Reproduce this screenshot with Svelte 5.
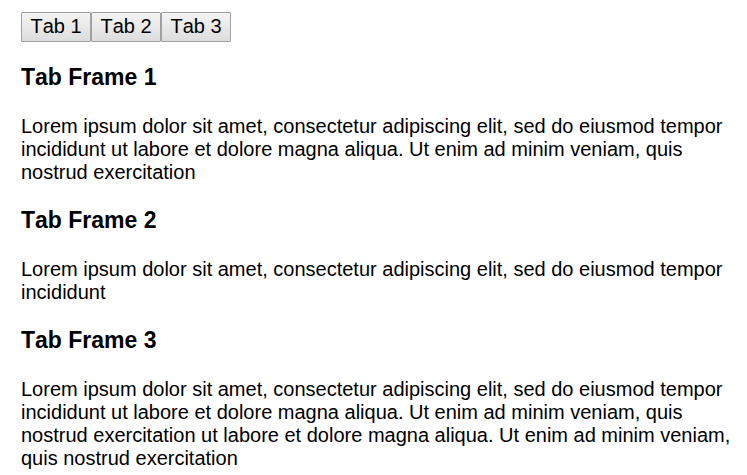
<script>
  const tabs = ['Tab 1', 'Tab 2', 'Tab 3'];
  const frames = [
    {
      title: 'Tab Frame 1',
      text: 'Lorem ipsum dolor sit amet, consectetur adipiscing elit, sed do eiusmod tempor incididunt ut labore et dolore magna aliqua. Ut enim ad minim veniam, quis nostrud exercitation'
    },
    {
      title: 'Tab Frame 2',
      text: 'Lorem ipsum dolor sit amet, consectetur adipiscing elit, sed do eiusmod tempor incididunt'
    },
    {
      title: 'Tab Frame 3',
      text: 'Lorem ipsum dolor sit amet, consectetur adipiscing elit, sed do eiusmod tempor incididunt ut labore et dolore magna aliqua. Ut enim ad minim veniam, quis nostrud exercitation ut labore et dolore magna aliqua. Ut enim ad minim veniam, quis nostrud exercitation'
    }
  ];
</script>

<main>
  <div class="tabs">
    {#each tabs as tab}
      <button type="button">{tab}</button>
    {/each}
  </div>
  <div class="frames">
    {#each frames as frame}
      <section>
        <h2>{frame.title}</h2>
        <p>{frame.text}</p>
      </section>
    {/each}
  </div>
</main>

<style>
  :global(body) {
    background: #fff;
  }

  main {
    padding: 12px 12px 0 21px;
    font: 20px/23px "Liberation Sans", Arial, sans-serif;
    font-kerning: none;
    color: #000;
  }

  .tabs {
    display: flex;
    margin-bottom: 24px;
  }

  button {
    box-sizing: border-box;
    min-width: 70px;
    margin: 0;
    padding: 2px 8px 3px;
    border: 1px solid #a0a0a0;
    border-radius: 1px;
    background: linear-gradient(#f4f4f4, #dddddd);
    font: inherit;
    font-kerning: none;
    color: #000;
  }

  .frames {
    display: flex;
    flex-direction: column;
    gap: 25px;
  }

  h2 {
    margin: 0 0 26px;
    font-size: 23px;
    line-height: 23px;
    font-weight: bold;
  }

  p {
    margin: 0;
  }
</style>
